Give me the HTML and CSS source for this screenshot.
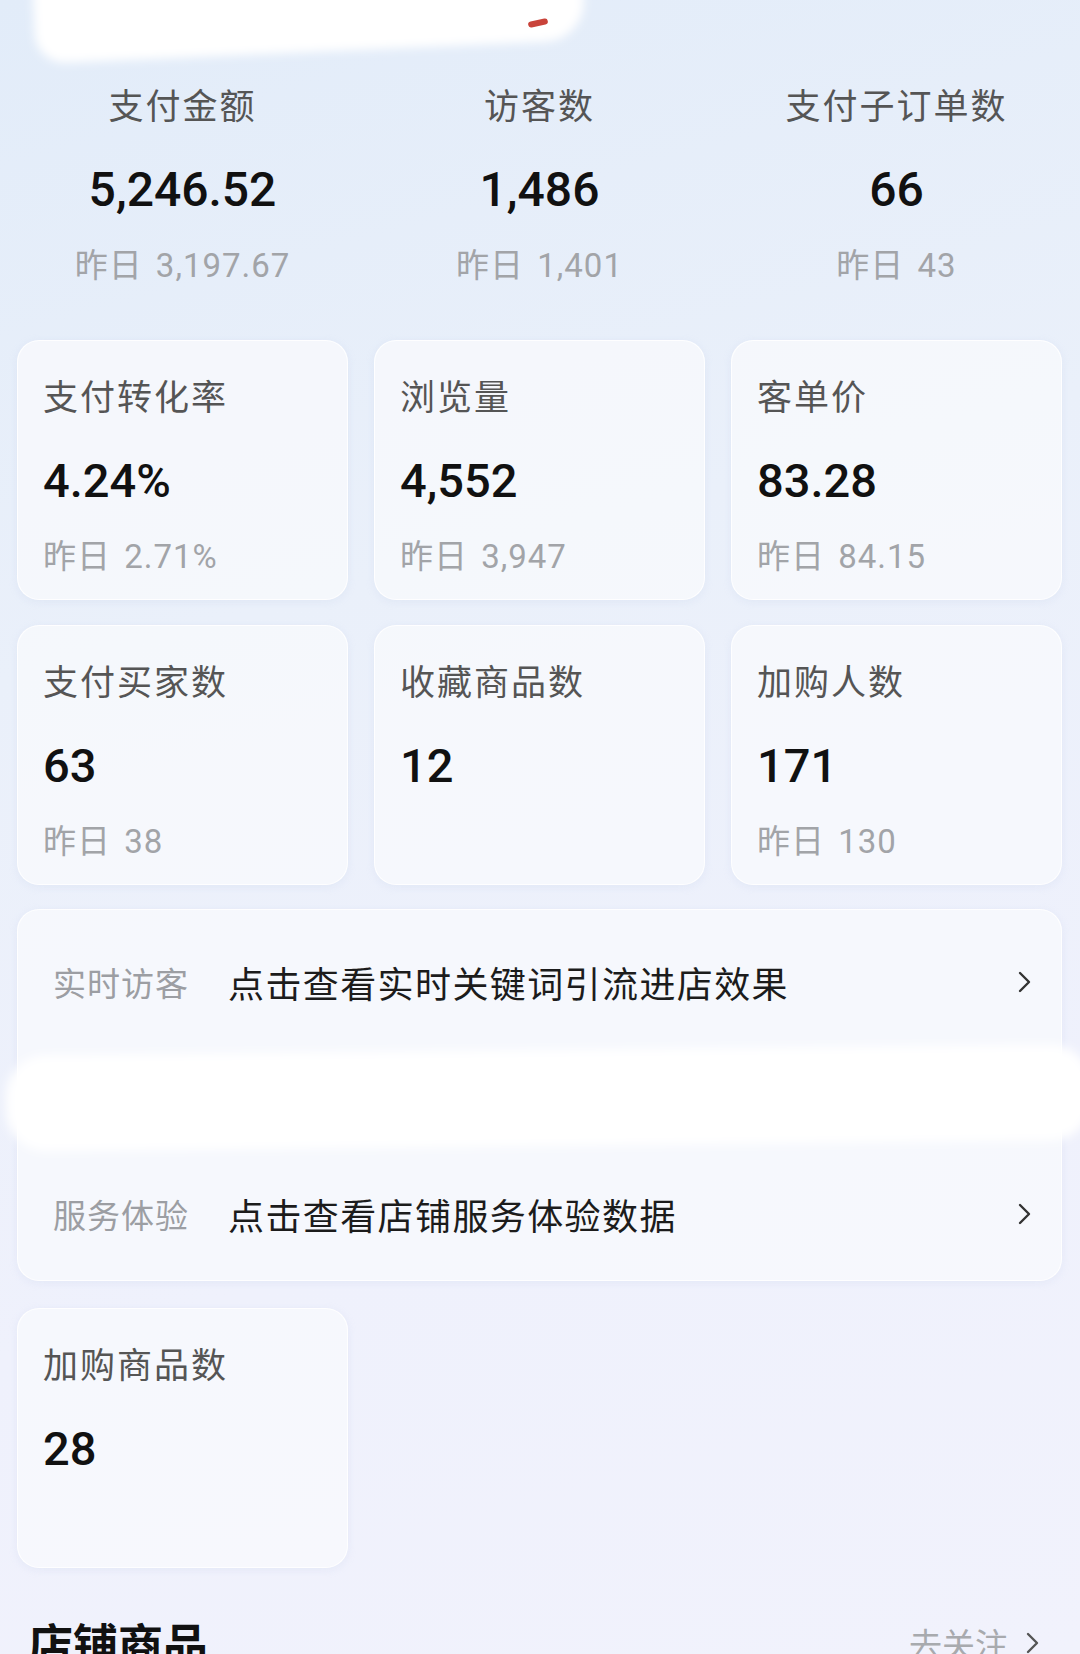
FILE: index.html
```html
<!DOCTYPE html>
<html lang="zh-CN">
<head>
  <meta charset="UTF-8" />
  <meta name="viewport" content="width=device-width, initial-scale=1.0" />
  <title>数据概览</title>
  <link rel="stylesheet" href="styles.css">
</head>
<body>
  <div class="page">
    <div class="smear smear-top"></div>
    <div class="red-mark"></div>

    <div class="summary">
      <div class="summary-item">
        <div class="label">支付金额</div>
        <div class="value">5,246.52</div>
        <div class="prev">昨日 3,197.67</div>
      </div>
      <div class="summary-item">
        <div class="label">访客数</div>
        <div class="value">1,486</div>
        <div class="prev">昨日 1,401</div>
      </div>
      <div class="summary-item">
        <div class="label">支付子订单数</div>
        <div class="value">66</div>
        <div class="prev">昨日 43</div>
      </div>
    </div>

    <div class="grid">
      <div class="card">
        <div class="label">支付转化率</div>
        <div class="value">4.24%</div>
        <div class="prev">昨日 2.71%</div>
      </div>
      <div class="card">
        <div class="label">浏览量</div>
        <div class="value">4,552</div>
        <div class="prev">昨日 3,947</div>
      </div>
      <div class="card">
        <div class="label">客单价</div>
        <div class="value">83.28</div>
        <div class="prev">昨日 84.15</div>
      </div>
      <div class="card">
        <div class="label">支付买家数</div>
        <div class="value">63</div>
        <div class="prev">昨日 38</div>
      </div>
      <div class="card">
        <div class="label">收藏商品数</div>
        <div class="value">12</div>
      </div>
      <div class="card">
        <div class="label">加购人数</div>
        <div class="value">171</div>
        <div class="prev">昨日 130</div>
      </div>
    </div>

    <div class="links">
      <div class="link-row">
        <span class="link-label">实时访客</span>
        <span class="link-text">点击查看实时关键词引流进店效果</span>
        <svg class="chevron" viewBox="0 0 14 24"><polyline points="2,3 11,12 2,21" /></svg>
      </div>
      <div class="link-row">
        <span class="link-label"></span>
        <span class="link-text"></span>
        <svg class="chevron" viewBox="0 0 14 24"><polyline points="2,3 11,12 2,21" /></svg>
      </div>
      <div class="link-row">
        <span class="link-label">服务体验</span>
        <span class="link-text">点击查看店铺服务体验数据</span>
        <svg class="chevron" viewBox="0 0 14 24"><polyline points="2,3 11,12 2,21" /></svg>
      </div>
      <div class="smear smear-mid"></div>
    </div>

    <div class="grid">
      <div class="card">
        <div class="label">加购商品数</div>
        <div class="value">28</div>
      </div>
    </div>

    <div class="section-head">
      <span class="section-title">店铺商品</span>
      <span class="section-more">去关注
        <svg class="chevron small" viewBox="0 0 14 24"><polyline points="2,3 11,12 2,21" /></svg>
      </span>
    </div>
  </div>
</body>
</html>
```

FILE: styles.css
```css
html, body {
  margin: 0;
  padding: 0;
  height: 100%;
  overflow: hidden;
}
body {
  background: linear-gradient(165deg, #e2ecf9 0%, #eaf0fa 35%, #eff1fc 70%, #f1f2fc 100%);
  font-family: Roboto, "Noto Sans CJK SC", sans-serif;
  color: #141414;
}
.page {
  position: relative;
  padding: 0 18px 0 17px;
}

/* redaction scribbles */
.smear {
  position: absolute;
  background: #fff;
  filter: blur(5px);
}
.smear-top {
  left: 34px;
  top: -30px;
  width: 550px;
  height: 82px;
  border-radius: 10px 40px 40px 30px;
  transform: rotate(-2.5deg);
}
.red-mark {
  position: absolute;
  left: 528px;
  top: 20px;
  width: 20px;
  height: 6px;
  background: #c9433a;
  border-radius: 3px;
  transform: rotate(-12deg);
}
.smear-mid {
  left: -12px;
  right: -30px;
  top: 140px;
  height: 96px;
  border-radius: 40px;
  transform: rotate(-0.6deg);
}

/* top summary */
.summary {
  display: grid;
  grid-template-columns: repeat(3, 1fr);
  column-gap: 26px;
  padding-top: 85px;
  text-align: center;
}
.label {
  font-size: 35px;
  line-height: 46px;
  letter-spacing: 2px;
  color: #555;
}
.value {
  margin-top: 29px;
  font-size: 47px;
  line-height: 60px;
  font-weight: 500;
  color: #111;
}
.summary .value {
  font-size: 48px;
}
.prev {
  margin-top: 24px;
  font-size: 33px;
  line-height: 44px;
  letter-spacing: 1px;
  word-spacing: 4px;
  color: #a2a4a8;
}

/* metric cards */
.grid {
  display: grid;
  grid-template-columns: repeat(3, 1fr);
  gap: 25px 26px;
  margin-top: 52px;
}
.card {
  min-height: 223px;
  padding: 35px 24px 0 25px;
  background: rgba(248, 249, 253, 0.82);
  border: 1px solid rgba(255, 255, 255, 0.9);
  border-radius: 22px;
  box-shadow: 0 2px 8px rgba(180, 195, 225, 0.18);
}

/* link list */
.links {
  position: relative;
  margin-top: 24px;
  padding: 14px 0 8px;
  background: rgba(248, 249, 253, 0.82);
  border: 1px solid rgba(255, 255, 255, 0.9);
  border-radius: 22px;
  box-shadow: 0 2px 8px rgba(180, 195, 225, 0.18);
}
.link-row {
  display: flex;
  align-items: center;
  height: 116px;
  padding: 0 29px 0 35px;
}
.link-label {
  width: 175px;
  font-size: 33px;
  letter-spacing: 1px;
  color: #9c9ea3;
}
.link-text {
  flex: 1;
  font-size: 36px;
  letter-spacing: 1.4px;
  color: #1c1c1c;
}
.chevron {
  width: 14px;
  height: 24px;
  fill: none;
  stroke: #333;
  stroke-width: 2.4;
  stroke-linecap: round;
  stroke-linejoin: round;
}
.links + .grid {
  margin-top: 27px;
}

/* bottom section */
.section-head {
  display: flex;
  justify-content: space-between;
  align-items: center;
  margin-top: 42px;
  padding: 0 22px 0 11px;
}
.section-title {
  font-size: 45px;
  font-weight: 700;
  color: #111;
}
.section-more {
  display: flex;
  align-items: center;
  gap: 18px;
  font-size: 33px;
  color: #a8aaae;
}
.chevron.small {
  stroke: #555;
}
```
